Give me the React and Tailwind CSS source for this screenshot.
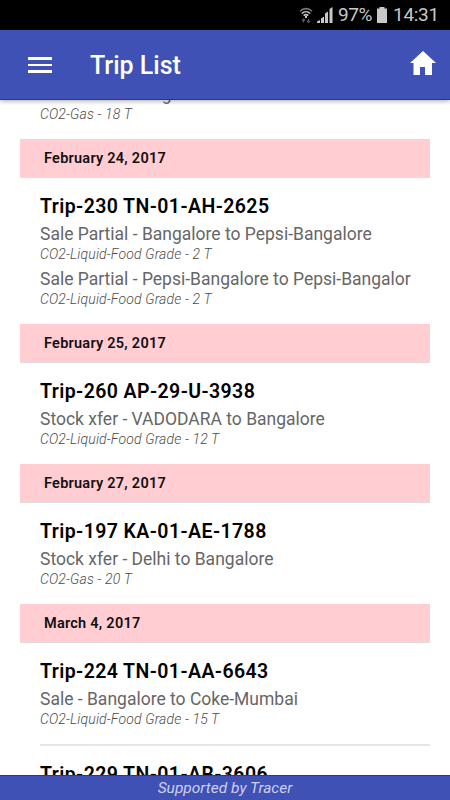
import React from 'react';

const days = [
  {
    date: null,
    trips: [
      {
        title: null,
        legs: [{ route: 'Stock xfer - Bangalore to Delhi', cargo: 'CO2-Gas - 18 T' }],
      },
    ],
  },
  {
    date: 'February 24, 2017',
    trips: [
      {
        title: 'Trip-230 TN-01-AH-2625',
        legs: [
          { route: 'Sale Partial - Bangalore to Pepsi-Bangalore', cargo: 'CO2-Liquid-Food Grade - 2 T' },
          { route: 'Sale Partial - Pepsi-Bangalore to Pepsi-Bangalor', cargo: 'CO2-Liquid-Food Grade - 2 T' },
        ],
      },
    ],
  },
  {
    date: 'February 25, 2017',
    trips: [
      {
        title: 'Trip-260 AP-29-U-3938',
        legs: [{ route: 'Stock xfer - VADODARA to Bangalore', cargo: 'CO2-Liquid-Food Grade - 12 T' }],
      },
    ],
  },
  {
    date: 'February 27, 2017',
    trips: [
      {
        title: 'Trip-197 KA-01-AE-1788',
        legs: [{ route: 'Stock xfer - Delhi to Bangalore', cargo: 'CO2-Gas - 20 T' }],
      },
    ],
  },
  {
    date: 'March 4, 2017',
    trips: [
      {
        title: 'Trip-224 TN-01-AA-6643',
        legs: [{ route: 'Sale - Bangalore to Coke-Mumbai', cargo: 'CO2-Liquid-Food Grade - 15 T' }],
      },
      { title: 'Trip-229 TN-01-AB-3606', legs: [] },
    ],
  },
];

function StatusBar() {
  return (
    <div className="h-[30px] shrink-0 bg-black flex items-center justify-end pr-[11px] text-[#c8c8c8]">
      <svg className="w-[14px] h-[18px] mr-1" viewBox="0 0 14 18" fill="none" stroke="currentColor">
        <path d="M1 5.2C4.5 1.8 9.5 1.8 13 5.2" strokeWidth="1.6" opacity="0.6" />
        <path d="M2.8 7.5C5.3 5.1 8.7 5.1 11.2 7.5" strokeWidth="1.6" />
        <path d="M4.7 9.7C6 8.5 8 8.5 9.3 9.7" strokeWidth="1.6" />
        <path d="M7 10v2" strokeWidth="2" />
        <path d="M4.5 16.5v-3.5M3 14.5l1.5-1.5 1.5 1.5M9.5 13v3.5M8 15l1.5 1.5 1.5-1.5" strokeWidth="1.2" opacity="0.45" />
      </svg>
      <svg className="w-4 h-4 mr-[5px]" viewBox="0 0 16 16" fill="currentColor">
        <path d="M0 16v-1.5l3-1.5v3zM4 16v-4.5l3-2V16zM8 16V6.5l3-2V16zM12.5 16V2L15.5 0v16z" />
      </svg>
      <span className="w-[35px] text-[19px] leading-[32px] tracking-[-0.4px]">97%</span>
      <svg className="w-[10px] h-4 ml-[4px] mr-[6px]" viewBox="0 0 10 16" fill="currentColor">
        <path d="M2.5 0h5v1.5H10V16H0V1.5h2.5z" />
      </svg>
      <span className="w-[46px] text-[19px] leading-[32px] tracking-[-0.3px]">14:31</span>
    </div>
  );
}

function Header() {
  return (
    <header className="relative z-10 h-[70px] shrink-0 bg-[#3f51b5] border-b border-[#1c3aa5] shadow-[0_1px_5px_rgba(0,0,0,0.35)] flex items-center pl-[28px] pr-[14px] text-white">
      <button className="mt-px flex flex-col gap-[4px]" aria-label="Menu">
        <span className="w-6 h-[3px] bg-white" />
        <span className="w-6 h-[2px] bg-white" />
        <span className="w-6 h-[3px] bg-white" />
      </button>
      <h1 className="ml-[38px] mt-[3px] text-[25px] leading-[30px] font-medium">Trip List</h1>
      <svg className="ml-auto mb-[3px] w-[26px] h-6" viewBox="0 0 26 24" fill="currentColor" aria-label="Home">
        <path d="M13 0L0 12H3.5v12H10v-8h5v8h7V12h4z" />
      </svg>
    </header>
  );
}

function Leg({ route, cargo }) {
  return (
    <div className="pb-[2px] whitespace-nowrap">
      <p className="pt-[2px] text-[17.5px] leading-[24px] text-[#666]">{route}</p>
      <p className="text-[14px] leading-[17px] tracking-[0.15px] italic font-light text-[#4c4c4c]">{cargo}</p>
    </div>
  );
}

function Trip({ title, legs, divided }) {
  return (
    <div className={divided ? 'ml-5 pb-[14px] border-b-2 border-[#e6e6e6]' : 'ml-5 pb-[14px]'}>
      {title && (
        <h3 className="pt-[16px] text-[19.5px] leading-[26px] tracking-[0.42px] font-semibold text-black whitespace-nowrap">{title}</h3>
      )}
      {legs.map((leg, i) => (
        <Leg key={i} {...leg} />
      ))}
    </div>
  );
}

function Day({ date, trips }) {
  return (
    <section>
      {date && (
        <h2 className="h-[39px] bg-[#ffcdd2] border-b border-[#dedede] pl-6 text-[14.5px] leading-[40px] tracking-[0.25px] font-semibold text-[#111]">
          {date}
        </h2>
      )}
      {trips.map((trip, i) => (
        <Trip key={i} {...trip} divided={i < trips.length - 1} />
      ))}
    </section>
  );
}

export default function App() {
  return (
    <div className="w-[450px] h-[800px] flex flex-col overflow-hidden bg-white font-[Roboto,sans-serif]">
      <StatusBar />
      <Header />
      <main className="flex-1 min-h-0 overflow-hidden px-5">
        <div className="-mt-5">
          {days.map((day, i) => (
            <Day key={i} {...day} />
          ))}
        </div>
      </main>
      <footer className="h-[25px] shrink-0 bg-[#3f51b5] border-t border-[#1c3aa5] text-center text-[15.5px] leading-[24px] italic text-[#ccd0ee]">
        Supported by Tracer
      </footer>
    </div>
  );
}
